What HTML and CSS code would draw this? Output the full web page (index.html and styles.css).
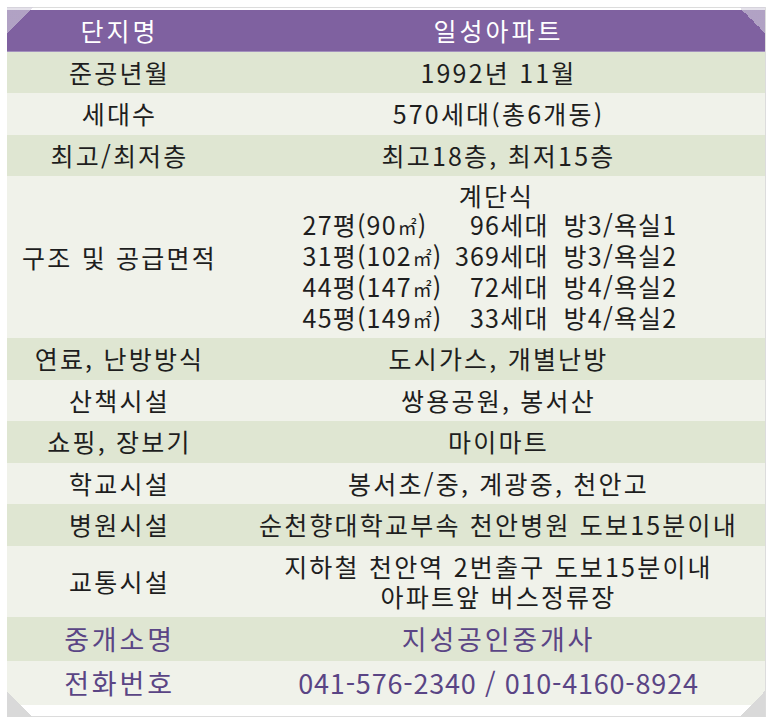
FILE: index.html
```html
<!DOCTYPE html>
<html lang="ko">
<head>
<meta charset="utf-8">
<link rel="stylesheet" href="styles.css">
</head>
<body>
<div class="card">
  <div class="table">
    <div class="row head"><div class="lab">단지명</div><div class="val">일성아파트</div></div>
    <div class="row g"><div class="lab">준공년월</div><div class="val">1992년 11월</div></div>
    <div class="row l"><div class="lab">세대수</div><div class="val">570세대(총6개동)</div></div>
    <div class="row g"><div class="lab">최고/최저층</div><div class="val">최고18층, 최저15층</div></div>
    <div class="row l struct">
      <div class="lab">구조 및 공급면적</div>
      <div class="val stack">
        <div class="type">계단식</div>
        <div class="units">
          <span>27평(90<span class="sq">㎡</span>)</span><span class="r">96세대</span><span>방3/욕실1</span>
          <span>31평(102<span class="sq">㎡</span>)</span><span class="r">369세대</span><span>방3/욕실2</span>
          <span>44평(147<span class="sq">㎡</span>)</span><span class="r">72세대</span><span>방4/욕실2</span>
          <span>45평(149<span class="sq">㎡</span>)</span><span class="r">33세대</span><span>방4/욕실2</span>
        </div>
      </div>
    </div>
    <div class="row g"><div class="lab">연료, 난방방식</div><div class="val">도시가스, 개별난방</div></div>
    <div class="row l"><div class="lab">산책시설</div><div class="val">쌍용공원, 봉서산</div></div>
    <div class="row g"><div class="lab">쇼핑, 장보기</div><div class="val">마이마트</div></div>
    <div class="row l"><div class="lab">학교시설</div><div class="val">봉서초/중, 계광중, 천안고</div></div>
    <div class="row g"><div class="lab">병원시설</div><div class="val">순천향대학교부속 천안병원 도보15분이내</div></div>
    <div class="row l two"><div class="lab">교통시설</div><div class="val stack"><span>지하철 천안역 2번출구 도보15분이내</span><span>아파트앞 버스정류장</span></div></div>
    <div class="row g big"><div class="lab">중개소명</div><div class="val">지성공인중개사</div></div>
    <div class="row l big"><div class="lab">전화번호</div><div class="val phone">041-576-2340 / 010-4160-8924</div></div>
  </div>
  <span class="fold tl"></span>
  <span class="fold tr"></span>
  <span class="fold bl"></span>
  <span class="fold br"></span>
</div>
</body>
</html>
```
FILE: styles.css
```css
html, body {
  margin: 0;
  padding: 0;
  background: #ffffff;
}
body {
  padding: 7px 0 0 7px;
  font-family: "Noto Sans CJK KR", "Noto Sans", sans-serif;
  color: #1e1e1e;
}
.card {
  position: relative;
  width: 759px;
  height: 710px;
  box-sizing: border-box;
  border: 1px solid #dcdcdc;
  border-left: 0;
  background: #ffffff;
  padding-top: 2px;
}
.table {
  display: flex;
  flex-direction: column;
}
.row {
  display: grid;
  grid-template-columns: 225px 1fr;
  align-items: center;
  height: 41.5px;
  font-size: 25px;
  letter-spacing: 2.2px;
  line-height: 29px;
}
.lab, .val {
  text-align: center;
  white-space: nowrap;
}
.head {
  background: #7f61a0;
  color: #ffffff;
  box-shadow: inset 0 -1px 0 #a391bd;
}
.head .lab, .head .val { letter-spacing: 3px; }
.g { background: #dfe6d2; }
.l { background: #f0f2ea; }
.struct { height: 162px; }
.two { height: 71px; }
.two .val { line-height: 30px; }
.big {
  height: 44px;
  font-size: 27px;
  letter-spacing: 2.8px;
  color: #5a4585;
}
.big .phone { letter-spacing: 0.8px; }
.stack {
  display: flex;
  flex-direction: column;
  align-items: center;
}
.units {
  display: grid;
  grid-template-columns: 143px 103px auto;
  margin-right: 17px;
  letter-spacing: 1.2px;
}
.units span { text-align: left; }
.units > span:nth-child(3n) { padding-left: 15px; }
.units .r { text-align: right; }
.units .sq {
  font-size: 19px;
  letter-spacing: 0;
  margin: 0 1px;
}
.type { padding-right: 4px; }
.fold {
  position: absolute;
  width: 26px;
  height: 26px;
}
.tl {
  top: -1px; left: 0;
  background: linear-gradient(135deg, rgba(210,205,220,0.6) 50%, transparent 50%);
}
.tr {
  top: -1px; right: 0;
  background: linear-gradient(225deg, rgba(210,205,220,0.6) 50%, transparent 50%);
}
.bl {
  bottom: -1px; left: 0;
  background: linear-gradient(45deg, #d9d9d9 50%, transparent 50%);
}
.br {
  bottom: -1px; right: 0;
  background: linear-gradient(315deg, #d9d9d9 50%, transparent 50%);
}
```
